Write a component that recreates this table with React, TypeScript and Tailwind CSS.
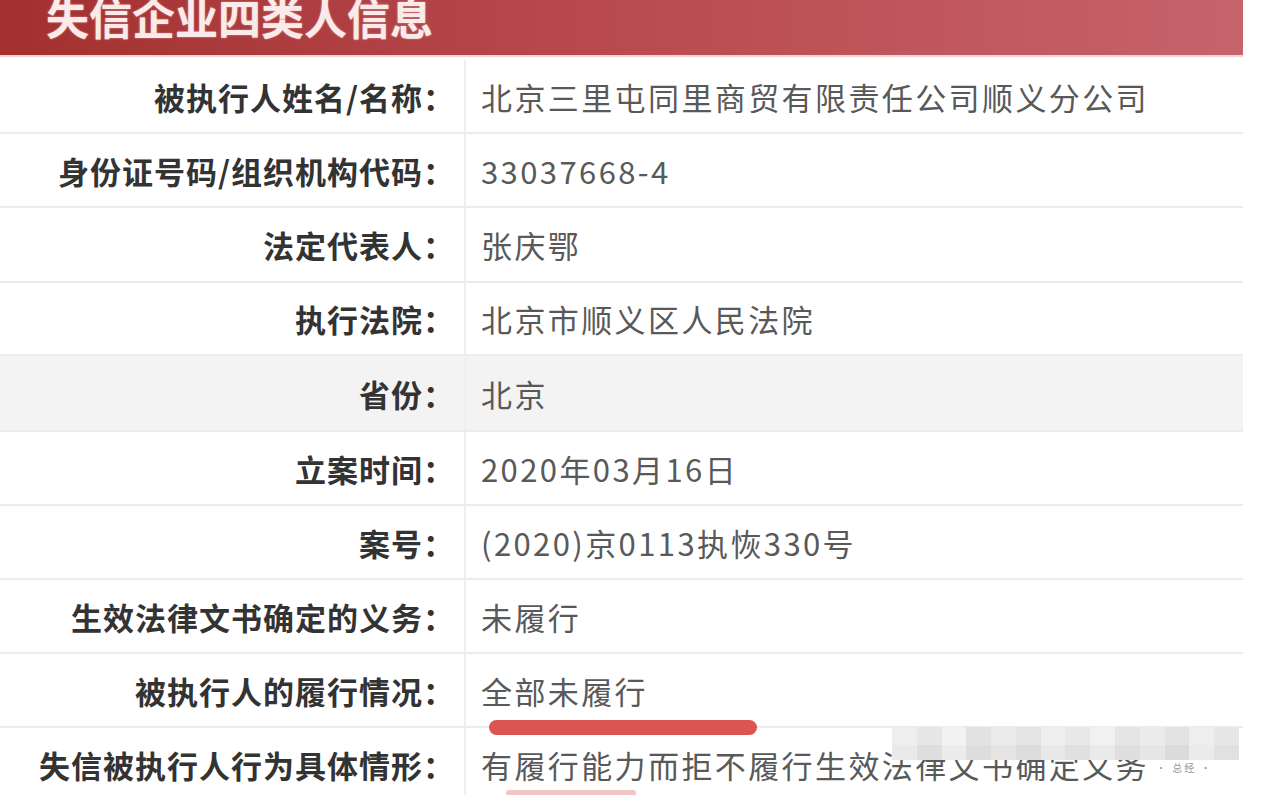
import React from "react";

const rows: { label: string; value: string; h: string; bg?: string }[] = [
  { label: "被执行人姓名/名称：", value: "北京三里屯同里商贸有限责任公司顺义分公司", h: "h-[74px]" },
  { label: "身份证号码/组织机构代码：", value: "33037668-4", h: "h-[74px]" },
  { label: "法定代表人：", value: "张庆鄂", h: "h-[75px]" },
  { label: "执行法院：", value: "北京市顺义区人民法院", h: "h-[73px]" },
  { label: "省份：", value: "北京", h: "h-[76px]", bg: "bg-[#f3f3f3]" },
  { label: "立案时间：", value: "2020年03月16日", h: "h-[74px]" },
  { label: "案号：", value: "(2020)京0113执恢330号", h: "h-[74px]" },
  { label: "生效法律文书确定的义务：", value: "未履行", h: "h-[74px]" },
  { label: "被执行人的履行情况：", value: "全部未履行", h: "h-[74px]" },
  { label: "失信被执行人行为具体情形：", value: "有履行能力而拒不履行生效法律文书确定义务", h: "h-[74px]" },
];

const mosaicTop = ["bg-[#eeeeee]", "bg-[#e6e6e6]", "bg-[#f2f2f2]", "bg-[#e2e2e2]", "bg-[#ebebeb]", "bg-[#e4e4e4]", "bg-[#efefef]", "bg-[#e8e8e8]", "bg-[#f1f1f1]", "bg-[#e5e5e5]", "bg-[#ececec]", "bg-[#e3e3e3]", "bg-[#eeeeee]", "bg-[#e7e7e7]"];
const mosaicBot = ["bg-[#e9e9e9]", "bg-[#dedede]", "bg-[#ececec]", "bg-[#dddddd]", "bg-[#e4e4e4]", "bg-[#dcdcdc]", "bg-[#e8e8e8]", "bg-[#e0e0e0]", "bg-[#eaeaea]", "bg-[#dfdfdf]", "bg-[#e6e6e6]", "bg-[#dbdbdb]", "bg-[#ebebeb]", "bg-[#e1e1e1]"];

export default function App() {
  return (
    <div
      className="w-[1271px] h-[795px] overflow-hidden bg-white"
      style={{ fontFamily: '"Noto Sans CJK SC", "Noto Sans", sans-serif' }}
    >
      <div className="w-[1243px]">
        <div className="h-[57px] bg-gradient-to-r from-[#a3302f] via-[#b94a50] to-[#c6636b] border-b-2 border-[#f2d6d6] overflow-hidden flex items-start pl-[46px]">
          <div className="text-[43px] font-bold leading-none text-[#fbeaea] mt-[-5px] [text-shadow:0_0_2px_rgba(255,220,220,0.6)]">
            失信企业四类人信息
          </div>
        </div>
        <div className="h-[3px]" />
        {rows.map((r, i) => (
          <div key={i} className={`flex ${r.h} border-b-2 border-[#ececec] ${r.bg ?? "bg-white"}`}>
            <div className="w-[466px] shrink-0 flex items-center justify-end pr-[9px] border-r-2 border-[#efefef]">
              <span className="text-[31px] font-bold text-[#333333] whitespace-nowrap tracking-[1px] pt-[2px]">{r.label}</span>
            </div>
            <div className="relative flex-1 flex items-center pl-[15px]">
              <span className="text-[31px] text-[#595959] whitespace-nowrap tracking-[2.4px] pt-[2px]">{r.value}</span>
              {i === 8 && (
                <div className="absolute left-[23px] top-[66px] w-[268px] h-[15px] rounded-full bg-[#dc5651] z-10" />
              )}
              {i === 9 && (
                <>
                  <div className="absolute left-[426px] top-[-1px] w-[347px] h-[33px] z-10 flex flex-col">
                    <div className="flex h-[18px]">
                      {mosaicTop.map((c, k) => (
                        <div key={k} className={`flex-1 ${c}`} />
                      ))}
                    </div>
                    <div className="flex h-[15px]">
                      {mosaicBot.map((c, k) => (
                        <div key={k} className={`flex-1 ${c}`} />
                      ))}
                    </div>
                  </div>
                  <div className="absolute left-[690px] top-[32px] text-[10px] text-[#9a9a9a] tracking-[2px] z-10">· 总经 ·</div>
                  <div className="absolute left-[40px] top-[62px] w-[130px] h-[6px] rounded-full bg-[#f2c6c4]" />
                </>
              )}
            </div>
          </div>
        ))}
      </div>
    </div>
  );
}
